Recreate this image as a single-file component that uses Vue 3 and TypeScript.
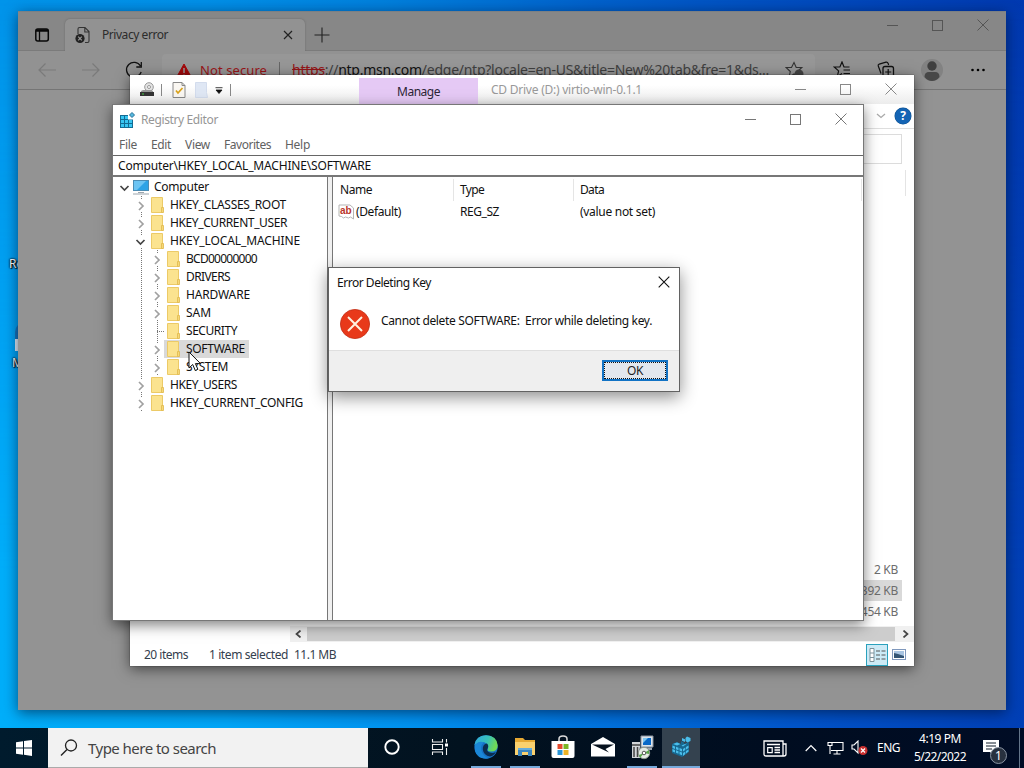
<script setup lang="ts">
interface TreeNode { label: string; level: number; state: 'open' | 'closed' | 'leaf'; width: number; selected?: boolean }

const tree: TreeNode[] = [
  { label: 'Computer', level: 0, state: 'open', width: 55 },
  { label: 'HKEY_CLASSES_ROOT', level: 1, state: 'closed', width: 116 },
  { label: 'HKEY_CURRENT_USER', level: 1, state: 'closed', width: 117 },
  { label: 'HKEY_LOCAL_MACHINE', level: 1, state: 'open', width: 130 },
  { label: 'BCD00000000', level: 2, state: 'closed', width: 71 },
  { label: 'DRIVERS', level: 2, state: 'closed', width: 44 },
  { label: 'HARDWARE', level: 2, state: 'closed', width: 64 },
  { label: 'SAM', level: 2, state: 'closed', width: 25 },
  { label: 'SECURITY', level: 2, state: 'leaf', width: 51 },
  { label: 'SOFTWARE', level: 2, state: 'closed', width: 59, selected: true },
  { label: 'SYSTEM', level: 2, state: 'closed', width: 42 },
  { label: 'HKEY_USERS', level: 1, state: 'closed', width: 67 },
  { label: 'HKEY_CURRENT_CONFIG', level: 1, state: 'closed', width: 133 },
]

const menus = [
  { label: 'File', width: 18 },
  { label: 'Edit', width: 20 },
  { label: 'View', width: 25 },
  { label: 'Favorites', width: 47 },
  { label: 'Help', width: 25 },
]

// Tightens or loosens the tracking so that a label takes a set width in pixels.
const vFit = {
  mounted(el: HTMLElement, binding: { value: number }) {
    const count = (el.textContent ?? '').length
    const natural = el.getBoundingClientRect().width
    if (count > 0) el.style.letterSpacing = `${(binding.value - natural) / count}px`
  },
}
</script>

<template>
  <div class="desktop">
    <span class="shortcut first">Re</span>
    <span class="shortcut-icon"></span>
    <span class="shortcut second">Mi</span>

    <section class="edge">
      <header class="tabstrip">
        <div class="tab-menu">
          <svg width="16" height="16" viewBox="0 0 16 16"><rect x="1.8" y="2" width="12.5" height="12" rx="2" fill="none" stroke="#080808" stroke-width="1.5" /><path d="M2 3.5h12" stroke="#080808" stroke-width="2.5" /><path d="M5.5 4v10" stroke="#080808" stroke-width="1.3" /></svg>
        </div>
        <div class="tab">
          <svg class="tab-icon" width="16" height="18" viewBox="0 0 16 18"><path d="M3 8V3q0-1.5 1.5-1.5H10l4 4V15q0 1.5-1.5 1.5H10M9.8 1.8V6H14" fill="none" stroke="#333" stroke-width="1.1" /><circle cx="5" cy="12.5" r="4.6" fill="#222" /><path d="m3.2 10.7 3.6 3.6m0-3.6-3.6 3.6" stroke="#999" stroke-width="1.2" /></svg>
          <span v-fit="66" class="tab-title">Privacy error</span>
          <svg class="tab-close" width="10" height="10" viewBox="0 0 10 10"><path d="m1 1 8 8m0-8-8 8" stroke="#222" stroke-width="1.2" /></svg>
        </div>
        <svg class="plus" width="16" height="16" viewBox="0 0 16 16"><path d="M8 .5v15M.5 8h15" stroke="#222" stroke-width="1.1" /></svg>
        <div class="caption edge-caption">
          <svg width="11" height="11" viewBox="0 0 11 11"><path d="M0 5.5h11" stroke="#555" /></svg>
          <svg width="11" height="11" viewBox="0 0 11 11"><rect x=".5" y=".5" width="10" height="10" fill="none" stroke="#555" /></svg>
          <svg width="12" height="12" viewBox="0 0 12 12"><path d="m.5.5 11 11m0-11-11 11" stroke="#555" /></svg>
        </div>
      </header>
      <div class="toolbar">
        <svg class="nav" width="20" height="16" viewBox="0 0 20 16"><path d="M19 8H2M8.5 1.5 2 8l6.5 6.5" fill="none" stroke="#7a7a7a" stroke-width="1.2" /></svg>
        <svg class="nav forward" width="20" height="16" viewBox="0 0 20 16"><path d="M1 8h17m-6.5-6.5L18 8l-6.5 6.5" fill="none" stroke="#7a7a7a" stroke-width="1.2" /></svg>
        <svg class="nav reload" width="18" height="18" viewBox="0 0 18 18"><path d="M16.2 11A7.5 7.5 0 1 1 15.5 5M16.3 1v5h-5" fill="none" stroke="#111" stroke-width="1.3" /></svg>
        <div class="address">
          <svg class="warning" width="16" height="15" viewBox="0 0 16 15"><path d="M8 1 15.5 14.5H.5z" fill="#a4090b" stroke="#a4090b" stroke-linejoin="round" /><path d="M8 5v5M8 11.5v2" stroke="#999" stroke-width="1.5" /></svg>
          <span v-fit="67" class="insecure">Not secure</span>
          <span class="address-rule"></span>
          <span v-fit="477" class="url"><span class="scheme">https</span><span class="dim">://</span>ntp.msn.com<span class="dim">/edge/ntp?locale=en-US&amp;title=New%20tab&amp;fre=1&amp;ds...</span></span>
          <svg class="star" width="19" height="18" viewBox="0 0 19 18"><path d="m9 1.5 2.2 5h5.6l-4.3 4 1.3 6L9 13l-5 3.5 1.3-6-4.3-4h5.5z" fill="none" stroke="#333" stroke-width="1.1" /><circle cx="14" cy="13" r="4.5" fill="#444" /></svg>
        </div>
        <div class="edge-actions">
          <svg width="18" height="18" viewBox="0 0 18 18"><path d="m9 12.5-4.7 3.2 1.3-5.8L1.2 6h5.7L9 1l2 5h5.5M10.5 9H17M10.5 12.5H17" fill="none" stroke="#111" stroke-width="1.2" /></svg>
          <svg width="18" height="18" viewBox="0 0 18 18"><path d="M4 12.5 1.2 4.8q-.3-1.3 1-1.7L9 1.2q1.5-.3 2.3 1.5l.3 1.3" fill="none" stroke="#111" stroke-width="1.2" /><rect x="6" y="5.5" width="10.5" height="10.5" rx="2" fill="none" stroke="#111" stroke-width="1.3" /><path d="M11.2 8v6M8.2 11h6" stroke="#111" stroke-width="1.2" /></svg>
          <svg width="22" height="22" viewBox="0 0 22 22"><circle cx="11" cy="11" r="11" fill="#828282" /><circle cx="11" cy="7" r="4.7" fill="#3f3f3f" /><path d="M3.5 18q0-5 4.5-5h6q4.5 0 4.5 5-3 4-7.5 4t-7.5-4" fill="#484848" /></svg>
          <svg width="16" height="4" viewBox="0 0 16 4"><circle cx="2.5" cy="2" r="1.3" /><circle cx="8" cy="2" r="1.3" /><circle cx="13.5" cy="2" r="1.3" /></svg>
        </div>
      </div>
    </section>

    <section class="explorer">
      <header class="explorer-title">
        <div class="quick">
          <svg width="16" height="16" viewBox="0 0 16 16"><circle cx="10" cy="5" r="4.3" fill="#e4e4e4" stroke="#999" /><circle cx="10" cy="5" r="1.5" fill="#fff" stroke="#999" /><path d="m2 9 2-1h8l2 1v4H1.5z" fill="#999" /><path d="M1 10h14v4H1z" fill="#333" /><path d="M3 12h2" stroke="#4c4" /></svg>
          <i></i>
          <svg class="check" width="14" height="16" viewBox="0 0 14 16"><path d="M1 .5h9l3 3v12H1z" fill="#faf7f2" stroke="#888" /><path d="M10 .5v3h3" fill="none" stroke="#888" /><path d="m4 8.5 2 2.5 4.5-5" fill="none" stroke="#d9a21b" stroke-width="1.7" /></svg>
          <svg class="blank" width="13" height="16" viewBox="0 0 13 16"><path d="M.5.5h11v10l1 5H.5z" fill="#dfe7f4" stroke="#d3dced" /></svg>
          <svg class="drop" width="8" height="7" viewBox="0 0 8 7"><path d="M.5.7h7M1 3h6L4 6.5z" stroke="#111" stroke-width=".8" fill="#111" /></svg>
          <i></i>
        </div>
        <div class="manage"><span v-fit="43">Manage</span></div>
        <span v-fit="151" class="explorer-name">CD Drive (D:) virtio-win-0.1.1</span>
        <div class="caption">
          <svg width="11" height="11" viewBox="0 0 11 11"><path d="M0 5.5h11" stroke="#888" /></svg>
          <svg width="11" height="11" viewBox="0 0 11 11"><rect x=".5" y=".5" width="10" height="10" fill="none" stroke="#888" /></svg>
          <svg width="12" height="12" viewBox="0 0 12 12"><path d="m.5.5 11 11m0-11-11 11" stroke="#888" /></svg>
        </div>
      </header>
      <div class="ribbon">
        <svg width="10" height="6" viewBox="0 0 10 6"><path d="m1 1 4 3.5L9 1" fill="none" stroke="#aaa" stroke-width="1.3" /></svg>
        <span class="help">?</span>
      </div>
      <div class="search-row"><div class="search-field"></div></div>
      <div class="column-row"></div>
      <div class="sizes">
        <span>2 KB</span><span class="picked">392 KB</span><span>454 KB</span>
      </div>
      <div class="scrollbar">
        <span class="arrow"><svg width="7" height="8" viewBox="0 0 7 8"><path d="M5.5.5 1.5 4l4 3.5" fill="none" stroke="#444" stroke-width="1.7" /></svg></span>
        <span class="thumb"></span>
        <span class="arrow"><svg width="7" height="8" viewBox="0 0 7 8"><path d="m1.5.5 4 3.5-4 3.5" fill="none" stroke="#444" stroke-width="1.7" /></svg></span>
      </div>
      <footer class="status">
        <span v-fit="44">20 items</span><span v-fit="79" class="chosen">1 item selected</span><span v-fit="42">11.1 MB</span>
        <div class="views">
          <span class="view-active"><svg width="17" height="14" viewBox="0 0 17 14"><path d="M1 .5h4v13H1zM1 5h4M1 9.5h4" fill="#fff" stroke="#7c929c" /><path d="M7 3h4m1.5 0h4M7 7h4m1.5 0h4M7 11h4m1.5 0h4" stroke="#555" /></svg></span>
          <svg width="14" height="11" viewBox="0 0 14 11"><rect x=".5" y=".5" width="13" height="10" fill="#fff" stroke="#7f98bd" /><path d="M2 2h10v7H2z" fill="#a9c5e2" /><path d="m2 4 4 1 6 2v2H2z" fill="#345575" /></svg>
        </div>
      </footer>
    </section>

    <section class="regedit">
      <header class="reg-title">
        <svg width="16" height="17" viewBox="0 0 16 17"><path d="M1 3h8v4.5h5V16H1z" fill="#126c94" /><path d="M2 4h3v3H2zM6 4h3v3H6zM2 8h3v3H2zM6 8h3v3H6zM10 8h3v3h-3zM2 12h3v3H2zM6 12h3v3H6zM10 12h3v3h-3z" fill="#38c6f2" /><path d="m13 .5 2.5 2.5L13 5.5 10.500 3z" fill="#54b9df" stroke="#276f96" /></svg>
        <span v-fit="77">Registry Editor</span>
        <div class="caption">
          <svg width="11" height="11" viewBox="0 0 11 11"><path d="M0 5.5h11" stroke="#777" /></svg>
          <svg width="11" height="11" viewBox="0 0 11 11"><rect x=".5" y=".5" width="10" height="10" fill="none" stroke="#777" /></svg>
          <svg width="12" height="12" viewBox="0 0 12 12"><path d="m.5.5 11 11m0-11-11 11" stroke="#777" /></svg>
        </div>
      </header>
      <nav class="menu"><span v-for="m in menus" :key="m.label" v-fit="m.width">{{ m.label }}</span></nav>
      <div class="path"><span v-fit="253">Computer\HKEY_LOCAL_MACHINE\SOFTWARE</span></div>
      <div class="panes">
        <div class="tree">
          <div v-for="n in tree" :key="n.label" class="node">
            <span v-for="i in n.level" :key="i" class="indent" :class="{ guide: i === 2 }"></span>
            <span class="toggle" :class="{ dotted: n.level > 0, leaf: n.state === 'leaf' }">
              <svg v-if="n.state === 'open'" width="11" height="12" viewBox="0 0 11 12"><path d="m1.5 4 4 4 4-4" fill="none" stroke="#444" stroke-width="1.7" /></svg>
              <svg v-else-if="n.state === 'closed'" width="11" height="12" viewBox="0 0 11 12"><path d="m4 2 4 4-4 4" fill="none" stroke="#a0a0a0" stroke-width="1.7" /></svg>
            </span>
            <span class="label" :class="{ selected: n.selected }">
              <svg v-if="n.level === 0" class="node-icon" width="18" height="16" viewBox="0 0 18 16"><rect x="1.5" y="1.5" width="15" height="10" fill="#2da3e6" stroke="#4b8cb4" /><path d="M2 2h12L5 11H2z" fill="#6cc4f3" /><path d="M6 13.5h6M1 15h16" stroke="#9ba5ad" /></svg>
              <svg v-else class="node-icon" width="18" height="16" viewBox="0 0 18 16"><path d="M3.5.5h11v15h-11z" fill="#fbe38f" stroke="#ecca67" /><path d="M13.5 10.5h2v5h-2z" fill="#f6d878" stroke="#dfb94b" stroke-width=".8" /></svg>
              <span v-fit="n.width" class="node-text">{{ n.label }}</span>
            </span>
          </div>
        </div>
        <div class="splitter"></div>
        <div class="list">
          <div class="list-row head"><div class="c1"><span v-fit="32">Name</span></div><div class="c2"><span v-fit="24">Type</span></div><div class="c3"><span v-fit="24">Data</span></div></div>
          <div class="list-row value">
            <div class="c1">
              <svg width="17" height="16" viewBox="0 0 17 16"><path d="M1 1h11l3.5 3v11l-3-2-2 1-3-1-2 1-2-1.5-2.5-.5z" fill="#fff" stroke="#b5b5b5" /><text x="2" y="10" class="ab">ab</text></svg>
              <span v-fit="45">(Default)</span>
            </div>
            <div class="c2"><span v-fit="39">REG_SZ</span></div>
            <div class="c3"><span v-fit="75">(value not set)</span></div>
          </div>
        </div>
      </div>
    </section>

    <section class="dialog">
      <header><span v-fit="94">Error Deleting Key</span><svg width="12" height="12" viewBox="0 0 12 12"><path d="m.7.7 10.6 10.6m0-10.6L.7 11.3" stroke="#111" stroke-width="1.1" /></svg></header>
      <div class="message">
        <svg width="30" height="30" viewBox="0 0 30 30"><circle cx="15" cy="15" r="14.6" fill="#e8391a" stroke="#c32f15" stroke-width=".8" /><path d="m8 8 14 14m0-14L8 22" stroke="#fff0df" stroke-width="2" /></svg>
        <span v-fit="271">Cannot delete SOFTWARE:&nbsp; Error while deleting key.</span>
      </div>
      <footer><button type="button"><span v-fit="16">OK</span></button></footer>
    </section>

    <svg class="pointer" width="14" height="21" viewBox="0 0 14 21"><path d="M1 1v16l3.7-3.5 2.6 6 2.6-1.2-2.5-5.7H12.5z" fill="#fff" stroke="#111" /></svg>

    <footer class="taskbar">
      <div class="start"><svg width="16" height="16" viewBox="0 0 16 16"><path d="m0 2.3 7-1v6.2H0zM8 1.1 16 0v7.5H8zM0 8.5h7v6.2l-7-1zM8 8.5h8V16l-8-1.2z" fill="#fff" /></svg></div>
      <div class="search">
        <svg width="18" height="18" viewBox="0 0 18 18"><circle cx="11" cy="6.5" r="5.5" fill="none" stroke="#222" stroke-width="1.3" /><path d="m7 10.5-6 6" stroke="#222" stroke-width="1.4" /></svg>
        <span v-fit="128">Type here to search</span>
      </div>
      <div class="task cortana"><svg width="16" height="16" viewBox="0 0 16 16"><circle cx="8" cy="8" r="6.7" fill="none" stroke="#fff" stroke-width="1.9" /></svg></div>
      <div class="task taskview"><svg width="17" height="16" viewBox="0 0 17 16"><path d="M1.5 0v3h10V0M1.5 16v-3h10v3M1.5 5.5h10v5h-10zM15.5 0v3.5M15.5 9v7" fill="none" stroke="#eee" stroke-width="1.1" /><path d="M14 4.5h3v3h-3z" fill="#fff" /></svg></div>
      <div class="task running browser">
        <svg width="24" height="24" viewBox="0 0 24 24">
          <defs><linearGradient id="sea" x1="0" y1="0" x2="1" y2=".3"><stop stop-color="#2fa7e2" /><stop offset=".6" stop-color="#38c1b8" /><stop offset="1" stop-color="#70da55" /></linearGradient></defs>
          <circle cx="12" cy="12" r="11.7" fill="#1672c5" /><path d="M.5 10Q2 .4 12 .3q11 .5 11.7 10.2 0 6-6.7 6-4.5-.2-3-3 1-3-1.5-5Q7 5 .5 10" fill="url(#sea)" /><path d="M12.5 8.5q-4 1-3.7 6 .8 6 7.2 7 4-.8 5.8-4.5-3 1.5-6 .5-4-1.5-2-4.500 1-2-.3-4" fill="#0b2d50" /><path d="M1 10q4-5 9-2.5Q6 10 7.5 16q1.5 5 7 7.2Q4 25 1 16" fill="#1b87d7" />
        </svg>
      </div>
      <div class="task running files"><svg width="22" height="20" viewBox="0 0 22 20"><path d="M1 1h8l2 2h10v15H1z" fill="#e6a933" /><path d="M1 5h20v13H1z" fill="#fad16e" /><path d="M4 19v-8h14v8h-4v-4H8v4z" fill="#3b85be" /><path d="M4 11h14v2H4z" fill="#64acdc" /></svg></div>
      <div class="task store"><svg width="24" height="24" viewBox="0 0 24 24"><path d="M8 7V4q0-3 4-3t4 3v3" fill="none" stroke="#ddd" stroke-width="1.5" /><path d="M.5 6h23v15q0 2-2 2h-19q-2 0-2-2z" fill="#fff" /><path d="M6.5 9H11.5v5h-5z" fill="#e34a2d" /><path d="M12.5 9h5v5h-5z" fill="#7ab526" /><path d="M6.5 15h5v5h-5z" fill="#2a95d6" /><path d="M12.5 15h5v5h-5z" fill="#edb327" /></svg></div>
      <div class="task mail"><svg width="24" height="20" viewBox="0 0 24 20"><path d="M0 7 12 0l12 7v12.5H0z" fill="#fff" /><path d="M1 7.5h22l-8.5 4.5 3.5 3.5z" fill="#06111e" /></svg></div>
      <div class="task running installer"><svg width="23" height="25" viewBox="0 0 23 25"><path d="M1 7h8v16H1z" fill="#d2d5d9" /><path d="M1 10h8M3 12v10M6.5 12v10" stroke="#444" stroke-width="1.5" /><path d="M10 1h12v11H10z" fill="#dce3ea" stroke="#8a94a0" /><path d="M12 3h8v7h-8z" fill="#0868c8" /><path d="M12 3h5l-5 5z" fill="#7cc6f2" /><path d="M8 12.5h13v2.5H8z" fill="#9ba5b0" /><circle cx="13" cy="18" r="5.7" fill="#e4ebe5" stroke="#8b948d" /><path d="m13 18 5-3v4zm0 0-4 5-1-3z" fill="#57a64b" /><circle cx="13" cy="18" r="1.8" fill="#fff" stroke="#555" /></svg></div>
      <div class="task running active registry"><svg width="20" height="22" viewBox="0 0 20 22"><path d="m1 8 5-2 4 2V5l3 1.5V8l5-2v10l-7 5-10-4z" fill="#17678f" /><path d="m1.5 9.5 2.5 1v2.5l-2.5-1zm3.5 1.2 2.5 1v2.5L5 13.2zm3.5 1.2 2.5 1v2.5l-2.5-1zM1.5 13l2.5 1v2.5l-2.5-1zM5 14.3l2.5 1v2.5L5 16.8zm3.5 1.3 2.5 1v2.7l-2.5-1zm3.5-2.6 2.3-1.5v2.5L12 15.5zm3-2L17.5 9.5V12L15 13.5zm-3 6 2.3-1.5v2.5L12 20zm3-2 2.5-1.5v2L15 17.5zM2 8l4-1.5 3.5 1.5L6 9.5zM10.5 9.5l3-1.2 2.5-.8-4 3zM11 2l3 1.2V6l-3-1.2zm5-1.5L19.5 2v3L16.5 6.5 14.5 5V2z" fill="#4bbdea" /></svg></div>
      <div class="tray">
        <svg class="news" width="24" height="17" viewBox="0 0 24 17"><path d="M1 1h19v15H3q-2 0-2-2zM20 4h3v10q0 2-2 2h-2M4 4.5h13M11.5 7.5H17M11.5 10H17M11.5 12.5H17" fill="none" stroke="#fff" stroke-width="1.3" /><path d="M4.7 7.7h4.5v5H4.7z" fill="none" stroke="#fff" stroke-width="1.2" /></svg>
        <svg class="up" width="12" height="8" viewBox="0 0 12 8"><path d="m.7 7 5.3-5.5L11.3 7" fill="none" stroke="#fff" stroke-width="1.2" /></svg>
        <svg class="network" width="17" height="14" viewBox="0 0 17 14"><path d="M5 1.5h11v8H4M1 1.5h4v3H1zM3 4.5V13M10 9.5V13M6.5 13h7" fill="none" stroke="#fff" stroke-width="1.1" /></svg>
        <svg class="volume" width="17" height="16" viewBox="0 0 17 16"><path d="M1 5h2l4-4v12L3 9H1z" fill="none" stroke="#fff" stroke-width="1.1" /><circle cx="12" cy="10.5" r="4.5" fill="#c93030" /><path d="m10 8.5 4 4m0-4-4 4" stroke="#fff" stroke-width="1.2" /></svg>
        <span v-fit="23" class="language">ENG</span>
        <div class="clock"><span v-fit="42">4:19 PM</span><span v-fit="52">5/22/2022</span></div>
        <div class="notice"><svg width="17" height="16" viewBox="0 0 17 16"><path d="M0 0h16v12h-5v4l-4-4H0z" fill="#fff" /><path d="M3 3h10M3 6h10M3 9h6" stroke="#111c2a" /></svg><b>1</b></div>
        <span class="show-desktop"></span>
      </div>
    </footer>
  </div>
</template>

<style>
body { margin: 0; overflow: hidden; }
</style>

<style scoped>
* { box-sizing: border-box; }
svg { flex: none; display: block; }
.desktop { position: relative; width: 1024px; height: 768px; overflow: hidden; font: 12px/18px "Noto Sans", "Open Sans", sans-serif; color: #111; white-space: nowrap; background: linear-gradient(90deg, #0094ea 0%, #0090e8 20%, #0082de 36%, #0062cc 58%, #0054c4 70%, #0046ba 85%, #0039b0 100%); }
.desktop::before { content: ""; position: absolute; inset: 0; background: linear-gradient(90deg, #00aefa 0%, #00a6f8 22%, #0092f0 40%, #0070dc 60%, #0052c8 80%, #003fb6 100%); mask-image: linear-gradient(transparent, #000 75%); }
section { position: absolute; display: flex; flex-direction: column; }
.caption { display: flex; align-items: center; margin-left: auto; }
.caption svg + svg { margin-left: 34px; }

.shortcut { position: absolute; left: 9px; font-size: 12px; color: #fff; text-shadow: 1px 1px 1px #000, 0 0 2px #000, 0 0 2px #000; }
.first { top: 255px; }
.second { top: 354px; left: 12px; }
.shortcut-icon { position: absolute; left: 15px; top: 322px; width: 20px; height: 29px; border-radius: 10px 0 0 0; background: linear-gradient(#1674ba 58%, #e6eff6 58%); }

.edge { left: 18px; top: 11px; width: 988px; height: 699px; background: #939393; border: 1px solid #7b8084; border-width: 1px 0 0; box-shadow: 0 3px 13px rgba(0, 15, 45, .6); }
.tabstrip { display: flex; height: 39px; background: #878787; align-items: flex-end; border-bottom: 1px solid #7b7b7b; }
.tab-menu { width: 47px; height: 31px; padding: 8px 0 0 16px; }
.tab { display: flex; align-items: center; width: 240px; height: 32px; padding: 0 12px 0 10px; margin-bottom: -1px; background: #929292; border-radius: 5px 5px 0 0; box-shadow: 0 0 2px #666; clip-path: inset(-3px -3px 0 -3px); }
.tab-title { margin-left: 11px; font-size: 12px; color: #2c2c2c; }
.tab-close { margin-left: auto; }
.plus { margin: 0 0 7px 9px; }
.edge-caption { align-self: flex-start; padding: 7px 17px 0 0; }
.toolbar { display: flex; align-items: center; height: 39px; background: #929292; border-bottom: 1px solid #757575; }
.nav { margin-left: 19px; }
.forward { margin-left: 24px; }
.reload { margin-left: 24px; margin-top: -1px; }
.address { display: flex; align-items: center; width: 653px; height: 32px; margin-left: 19px; padding-left: 14px; background: #979797; border-radius: 4px; font-size: 14px; }
.insecure { margin-left: 8px; color: #9a1517; font-size: 13px; }
.address-rule { width: 1px; height: 16px; margin: 0 12px; background: #666; }
.scheme { color: #951517; text-decoration: line-through; }
.dim { color: #404040; }
.star { margin-left: 16px; }
.edge-actions { display: flex; align-items: center; margin-left: 18px; }
.edge-actions svg:nth-child(2) { margin-left: 26px; }
.edge-actions svg:nth-child(3) { margin-left: 26px; }
.edge-actions svg:nth-child(4) { margin-left: 27px; }

.explorer { left: 130px; top: 75px; width: 784px; height: 591px; background: #fff; box-shadow: 0 3px 13px rgba(0, 0, 0, .55), 0 0 1px #333; color: #333; }
.explorer-title { display: flex; align-items: center; height: 29px; background: linear-gradient(#fff 35%, #ececec); }
.quick { display: flex; align-items: center; width: 229px; padding-left: 9px; }
.quick i { width: 1px; height: 12px; margin-left: 6px; background: #888; }
.check { margin-left: 10px; }
.blank { margin-left: 9px; }
.drop { margin: 2px 0 0 7px; }
.drop + i { margin-left: 7px; }
.manage { display: flex; align-items: center; justify-content: center; align-self: flex-end; width: 119px; height: 26px; padding-top: 2px; background: #e5c9f5; color: #2c2636; }
.explorer-name { margin-left: 13px; color: #999; }
.explorer .caption { padding: 0 17px 1px 0; }
.ribbon { display: flex; align-items: center; justify-content: flex-end; height: 25px; padding-right: 3px; border-bottom: 1px solid #dedede; gap: 9px; }
.help { width: 16px; height: 16px; border-radius: 50%; background: #1464b4; box-shadow: 0 0 0 .5px #0b4b87; color: #fff; text-align: center; font: bold 12px/16px "Noto Sans", sans-serif; }
.search-row { display: flex; height: 41px; padding: 5px 12px 6px; }
.search-field { flex: 1; border: 1px solid #dcdcdc; }
.column-row { height: 26px; margin-right: 8px; border-right: 1px solid #e4e4e4; }
.sizes { display: flex; flex-direction: column; align-items: flex-end; margin-top: auto; padding: 0 12px 4px 0; color: #6d6d6d; }
.sizes span { height: 21px; line-height: 21px; padding: 0 4px 0 10px; letter-spacing: -.3px; }
.sizes .picked { background: #d9d9d9; }
.scrollbar { display: flex; height: 16px; margin-left: 160px; background: #f0f0f0; }
.arrow { display: flex; width: 17px; align-items: center; justify-content: center; }
.thumb { flex: 1; background: #cdcdcd; margin: 1px 2px 1px 0; }
.status { display: flex; align-items: center; height: 24px; padding: 1px 0 0 14px; color: #34404d; }
.chosen { margin: 0 6px 0 21px; }
.views { display: flex; align-items: center; margin-left: auto; padding-right: 8px; gap: 4px; }
.view-active { display: flex; align-items: center; justify-content: center; width: 22px; height: 22px; border: 1px solid #2aa1bd; background: #cceaf6; }

.regedit { left: 112px; top: 104px; width: 752px; height: 517px; background: #fff; border: 1px solid #777; box-shadow: 0 4px 13px rgba(0, 0, 0, .5); }
.reg-title { display: flex; align-items: center; height: 30px; padding-left: 6px; color: #969696; }
.reg-title > span { margin-left: 6px; }
.regedit .caption { padding: 0 16px 2px 0; }
.menu { display: flex; gap: 14px; height: 20px; align-items: center; padding-left: 6px; color: #616161; }
.path { height: 22px; border-top: 1px solid #666; border-bottom: 2px solid #777; padding-left: 5px; line-height: 19px; font-size: 12px; color: #111; }
.panes { display: flex; flex: 1; min-height: 0; }
.tree { width: 215px; padding: 1px 0 0 3px; border-right: 1px solid #777; }
.node { display: flex; height: 18px; }
.indent { width: 16px; }
.guide, .dotted { background: repeating-linear-gradient(#777 0 1px, #fff 1px 2px) 9px 0 / 1px 100% no-repeat; }
.toggle { display: flex; align-items: center; justify-content: center; width: 16px; }
.toggle svg { background: #fff; margin: 1px 0 0 0; }
.leaf::after { content: ""; width: 7px; height: 1px; margin: 1px 0 0 9px; background: repeating-linear-gradient(90deg, #777 0 1px, #fff 1px 2px); }
.label { display: flex; align-items: center; padding-right: 4px; }
.node-icon { margin-right: 4px; }
.selected { background: #d9d9d9; }
.splitter { width: 5px; background: #f0f0f0; border-right: 1px solid #777; }
.list { flex: 1; padding-top: 2px; }
.list-row { display: flex; height: 22px; align-items: center; }
.head > div { height: 22px; line-height: 22px; border-right: 1px solid #e5e5e5; }
.list-row > div { padding-left: 6px; }
.list-row > .c1 { width: 121px; padding-left: 7px; }
.c2 { width: 120px; }
.c3 { width: 288px; }
.value > .c1 { display: flex; align-items: center; padding-left: 5px; }
.value .c1 span { margin-left: 1px; }
.ab { font: bold 10px "Liberation Sans", sans-serif; fill: #b9352b; }

.dialog { left: 328px; top: 267px; width: 352px; height: 125px; background: #fff; border: 1px solid #626262; box-shadow: 0 5px 16px rgba(0, 0, 0, .45); }
.dialog header { display: flex; align-items: center; justify-content: space-between; height: 30px; padding: 0 9px 0 8px; }
.dialog header svg { margin-bottom: 2px; }
.message { display: flex; height: 52px; padding: 11px 0 0 11px; }
.message span { margin: 3px 0 0 11px; }
.dialog footer { display: flex; flex: 1; align-items: center; justify-content: flex-end; background: #efefef; border-top: 1px solid #dfdfdf; padding: 0 11px 1px 0; }
button { width: 66px; height: 21px; padding: 0; border: 2px solid #1273c5; background: #e2e7ee; outline: 1px dotted #111; outline-offset: -3px; font: 12px/16px "Noto Sans", sans-serif; color: #222; }
.pointer { position: absolute; left: 188px; top: 351px; }

.taskbar { position: absolute; inset: 728px 0 0; display: flex; background: linear-gradient(90deg, #001b2d, #02121f 45%, #000d20 75%, #000c25); }
.start { display: flex; align-items: center; justify-content: center; width: 48px; }
.search { display: flex; align-items: center; width: 320px; padding-left: 12px; background: #f2f2f2; border-bottom: 1px solid #aaa; color: #444; font-size: 15px; }
.search span { margin-left: 10px; }
.task { display: flex; align-items: center; justify-content: center; border-bottom: 2px solid transparent; }
.running { border-bottom-color: #76a9db; }
.cortana { width: 48px; }
.taskview { width: 47px; }
.browser { width: 30px; margin-left: 8px; }
.files { width: 30px; margin-left: 9px; }
.store { width: 38px; margin-left: 4px; }
.mail { width: 40px; margin-left: 1px; }
.installer { width: 30px; margin-left: 4px; }
.active { background: #34424f; }
.registry { width: 38px; margin-left: 5px; }
.tray { display: flex; flex: 1; align-items: center; color: #fff; }
.news { margin-left: 63px; }
.up { margin-left: 18px; }
.network { margin-left: 10px; }
.volume { margin-left: 7px; }
.language { margin-left: 9px; }
.clock { display: flex; flex-direction: column; align-items: center; width: 54px; margin-left: 13px; }
.notice { position: relative; margin-left: 16px; }
.notice b { position: absolute; left: 7px; top: 7px; width: 17px; height: 17px; border: 1px solid #8994a3; border-radius: 50%; background: #28313f; text-align: center; font: 12px/15px "Noto Sans", sans-serif; }
.show-desktop { align-self: stretch; width: 1px; margin-left: auto; margin-right: 4px; background: #64758a; }
</style>
